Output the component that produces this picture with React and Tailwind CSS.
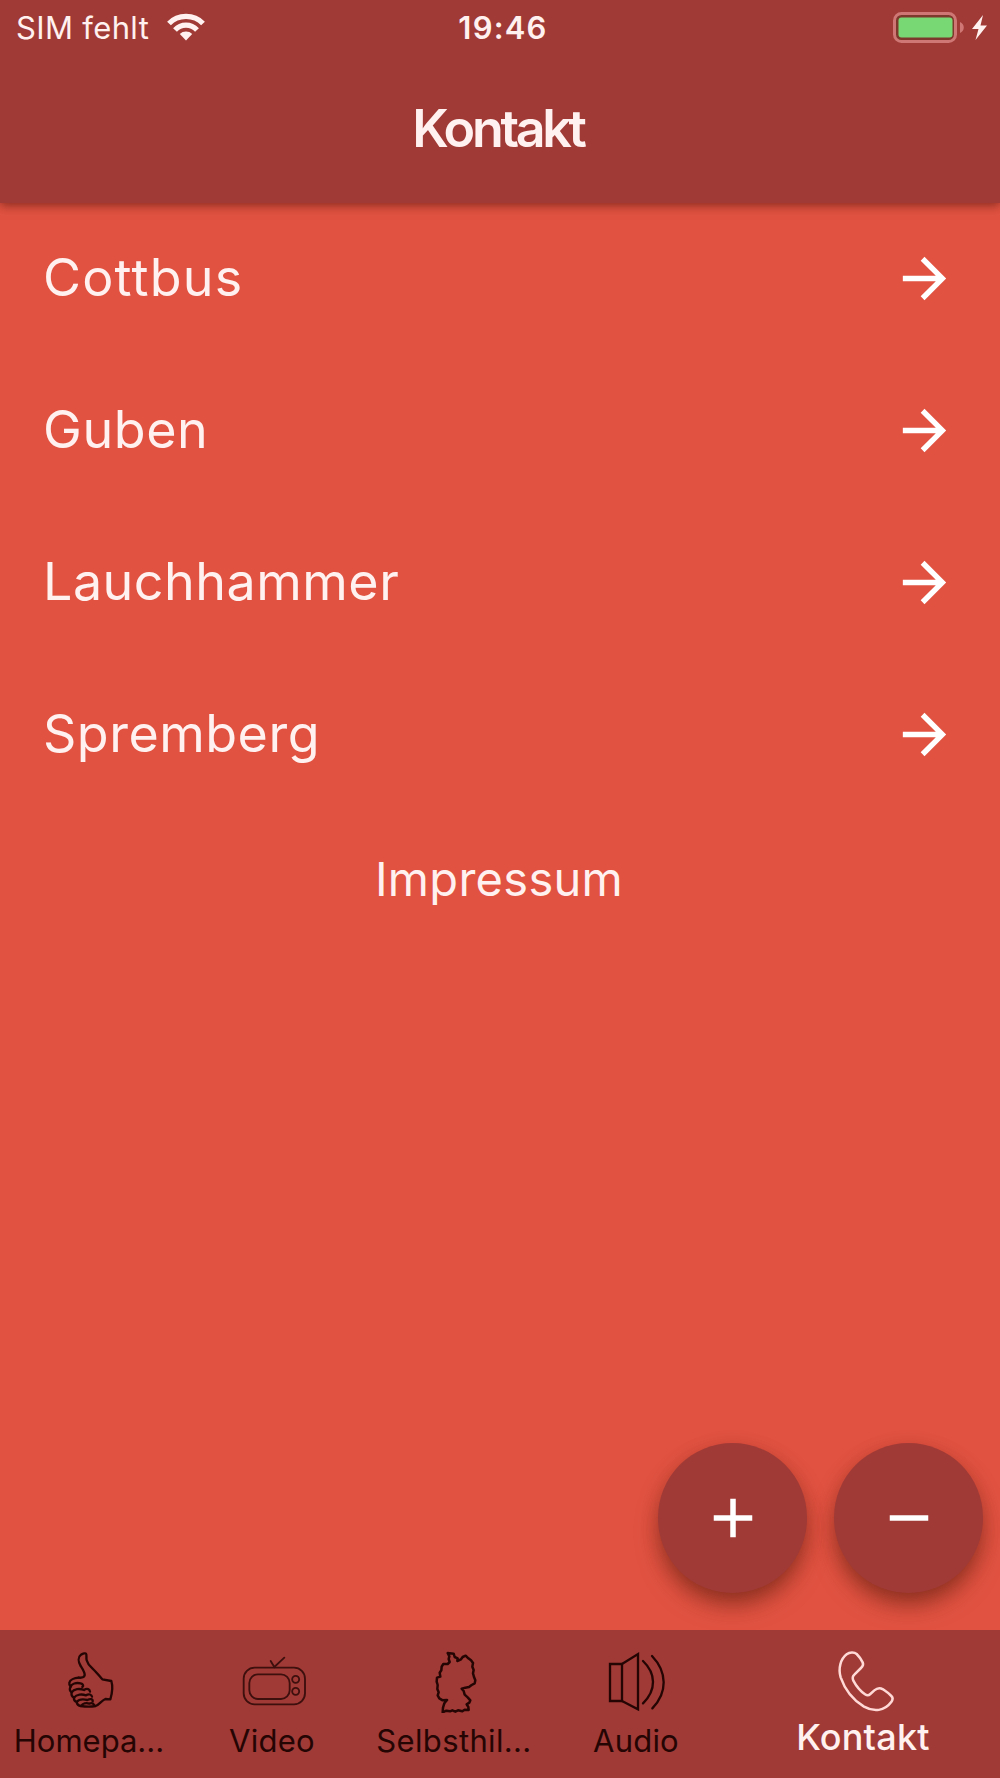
import React, { useState } from 'react';

const contacts = [
  { name: 'Cottbus', tracking: 'tracking-[1.2px]' },
  { name: 'Guben', tracking: 'tracking-[0.6px]' },
  { name: 'Lauchhammer', tracking: 'tracking-[0.5px]' },
  { name: 'Spremberg', tracking: 'tracking-[0.5px]' }
];

const ThumbIcon = () => (
  <svg className="w-[70px] h-[62px]" viewBox="168 93 210 186" fill="none" stroke="currentColor" strokeWidth="7" strokeLinecap="round" strokeLinejoin="round">
    <path d="M236 173 C246 174 252 174 254 166 C255 158 249 149 242 138 C234 125 234 111 243 104 C249 100 257 99 258 101 C261 105 258 113 260 121 C263 133 269 138 277 145 C288 155 298 168 307 178 L334 183 C339 199 337 218 331 238 L316 237 C304 242 298 254 287 258 C272 261 254 260 243 258" />
    <path d="M236 173 C223 174 210 180 208 188 C207 193 209 197 212 200 C215 191 228 187 242 190 C249 192 252 197 247 201" />
    <path d="M212 200 C208 207 209 213 215 217 C222 206 239 205 252 210 C262 203 269 208 270 215" />
    <path d="M215 217 C213 225 216 230 222 233 C230 222 247 222 258 226 C267 220 275 224 276 230" />
    <path d="M222 233 C221 240 224 244 230 246 C238 236 250 237 262 240 C271 235 279 237 278 244" />
    <path d="M230 246 C231 254 236 257 243 258 C248 250 259 248 268 251 C276 247 281 251 284 257" />
  </svg>
);

const TvIcon = () => (
  <svg className="w-[70px] h-[62px] opacity-80" viewBox="714 93 210 186" fill="none" stroke="currentColor" strokeWidth="5.5" strokeLinecap="round">
    <rect x="731" y="143" width="184" height="110" rx="33" />
    <rect x="748" y="163" width="121" height="74" rx="26" />
    <circle cx="887" cy="178" r="10.5" />
    <circle cx="887" cy="214" r="10.5" />
    <path d="M812 123 L823 141 L853 113" />
  </svg>
);

const GermanyIcon = () => (
  <svg className="w-[70px] h-[62px]" viewBox="240 93 210 186" fill="none" stroke="currentColor" strokeWidth="7.5" strokeLinejoin="round">
    <path d="M323 99 L341 101 L344 111 L353 115 L352 123 L363 118 L368 111 L377 107 L385 115 L393 121 L399 129 L397 140 L401 150 L399 160 L402 171 L406 181 L404 190 L395 195 L387 201 L376 203 L365 206 L371 213 L374 224 L383 232 L391 241 L388 248 L380 253 L385 261 L386 270 L374 269 L367 274 L354 271 L346 275 L337 271 L330 274 L319 272 L308 277 L309 263 L313 250 L321 240 L308 241 L298 235 L293 226 L296 217 L292 207 L293 195 L290 185 L291 173 L301 170 L299 158 L304 151 L305 140 L310 132 L323 132 L329 126 L326 117 L328 109 Z" />
  </svg>
);

const SpeakerIcon = () => (
  <svg className="w-[70px] h-[62px]" viewBox="786 93 210 186" fill="none" stroke="currentColor" strokeWidth="7" strokeLinecap="round">
    <path d="M846 132 H810 V243 H846 Z" />
    <path d="M846 132 L894 102 V268 L846 243" />
    <path d="M909 123 C948 160 950 210 909 250" />
    <path d="M936 108 C982 156 983 218 937 265" />
  </svg>
);

const PhoneIcon = () => (
  <svg className="w-[70px] h-[62px]" viewBox="448 92 210 186" fill="none" stroke="currentColor" strokeWidth="7.5" strokeLinejoin="round">
    <path d="M501 102 C510 95 524 95 531 101 C538 108 544 116 549 126 C552 133 550 138 544 143 L524 163 C517 169 518 174 521 181 C530 198 543 213 556 222 C562 226 567 226 572 221 L584 210 C592 203 602 202 610 207 C619 213 628 220 635 227 C640 232 639 240 634 246 C615 272 583 276 553 259 C522 240 496 209 483 171 C475 143 483 116 501 102 Z" />
  </svg>
);

const tabs = [
  { id: 'homepage', label: 'Homepa...', icon: ThumbIcon, tracking: '-ml-1' },
  { id: 'video', label: 'Video', icon: TvIcon, tracking: 'tracking-[0.3px] -ml-0.5' },
  { id: 'selbsthilfe', label: 'Selbsthil...', icon: GermanyIcon, tracking: 'tracking-[0.35px] -ml-0.5' },
  { id: 'audio', label: 'Audio', icon: SpeakerIcon, tracking: 'tracking-[0.2px] -ml-0.5' },
  { id: 'kontakt', label: 'Kontakt', icon: PhoneIcon, tracking: 'tracking-[0.2px] -ml-0.5' }
];

const StatusBar = () => (
  <div className="grid grid-cols-3 items-center h-[55px] pl-4 pr-[13px]">
    <div className="flex items-center gap-[18px]">
      <span className="text-[31px] leading-none whitespace-nowrap tracking-[0.35px]">SIM fehlt</span>
      <svg className="w-[38px] h-[28px] mt-[-2px]" viewBox="0 0 38 28" fill="none" stroke="currentColor" strokeWidth="5.2">
        <path d="M2 10.5 C11 1 27 1 36 10.5" />
        <path d="M8 17 C14 10.5 24 10.5 30 17" />
        <path d="M19 27.5 L12.8 21 C16 17.7 22 17.7 25.2 21 Z" fill="currentColor" stroke="none" />
      </svg>
    </div>
    <div className="pl-[3px] text-center text-[31px] leading-none font-semibold tracking-[1.2px]">19:46</div>
    <div className="flex items-center justify-end gap-[8px]">
      <svg className="w-[71px] h-[31px]" viewBox="0 0 71 31" fill="none">
        <rect x="1.5" y="1.5" width="61" height="28" rx="7" fill="#7d3a2c" stroke="#cf7774" strokeWidth="3" />
        <rect x="5.5" y="5.5" width="54" height="20" rx="3" fill="#78d873" />
        <path d="M67 10 C72 12 72 19 67 21 Z" fill="#cf7774" />
      </svg>
      <svg className="w-[15px] h-[25px]" viewBox="0 0 15 25" fill="currentColor">
        <path d="M11 0 L0 14 H6.5 L3.5 25 L15 10.5 H8.5 Z" />
      </svg>
    </div>
  </div>
);

const App = () => {
  const [activeTab, setActiveTab] = useState('kontakt');

  return (
    <div className="w-[1000px] h-[1778px] flex flex-col overflow-hidden bg-[#e15241] text-[#fff1ef] font-['Inter','Liberation_Sans',sans-serif]">
      {/* Header */}
      <header className="h-[203px] shrink-0 bg-[#a03a36] shadow-[0_2px_10px_rgba(80,20,10,0.65)]">
        <StatusBar />
        <h1 className="h-[148px] pr-[4px] text-center text-[52px] leading-[148px] font-semibold tracking-[-3.3px]">Kontakt</h1>
      </header>

      {/* Contact list */}
      <main className="flex-1 flex flex-col">
        <ul className="-mt-px">
          {contacts.map((contact) => (
            <li key={contact.name} className="flex items-center justify-between h-[152px] pl-[43px] pr-[43px]">
              <span className={`text-[52px] leading-none ${contact.tracking}`}>{contact.name}</span>
              <svg className="w-[65px] h-[65px] text-white" viewBox="0 0 24 24" fill="currentColor">
                <path d="M12 4l-1.41 1.41L16.17 11H4v2h12.17l-5.58 5.59L12 20l8-8z" />
              </svg>
            </li>
          ))}
        </ul>
        <button className="self-center mt-[45px] mr-[2px] text-[47px] leading-none tracking-[0.3px]">Impressum</button>

        {/* Zoom buttons */}
        <div className="flex justify-end gap-[27px] mt-auto pr-[17px] pb-[37px]">
          {['M5 11h6V5h2v6h6v2h-6v6h-2v-6H5z', 'M5 11h14v2H5z'].map((d) => (
            <button key={d} className="w-[149px] h-[150px] flex items-center justify-center rounded-full bg-[#a03a36] shadow-[0_14px_24px_-4px_rgba(90,30,15,0.6),0_4px_18px_rgba(110,30,15,0.2)]">
              <svg className="w-[66px] h-[66px] text-white" viewBox="0 0 24 24" fill="currentColor">
                <path d={d} />
              </svg>
            </button>
          ))}
        </div>
      </main>

      {/* Bottom navigation */}
      <nav className="h-[148px] shrink-0 flex bg-[#a03a36]">
        {tabs.map((tab) => {
          const Icon = tab.icon;
          const active = activeTab === tab.id;
          return (
            <button
              key={tab.id}
              onClick={() => setActiveTab(tab.id)}
              className={`flex flex-col items-center pt-[21px] ${active ? 'flex-1 text-[#ffd9d6]' : 'w-[182px] text-[#250504]'}`}
            >
              <Icon />
              <span className={`whitespace-nowrap ${tab.tracking} ${active ? 'mt-[6px] text-[36px] leading-[36px] font-medium text-[#fff1ef]' : 'mt-[12px] text-[31px] leading-[32px]'}`}>
                {tab.label}
              </span>
            </button>
          );
        })}
      </nav>
    </div>
  );
};

export default App;
